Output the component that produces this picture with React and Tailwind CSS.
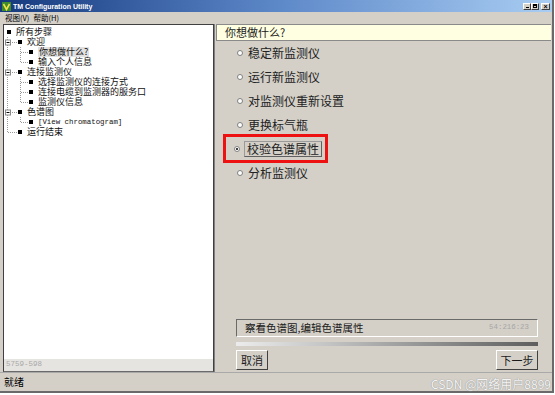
import React from "react";

const cjk = "font-['Noto_Sans_CJK_SC','Noto_Sans',sans-serif]";

const treeRows = [
  { kind: "root", text: "所有步骤" },
  { kind: "parent", text: "欢迎" },
  { kind: "child", text: "你想做什么?", selected: true },
  { kind: "childLast", text: "输入个人信息" },
  { kind: "parent", text: "连接监测仪" },
  { kind: "child", text: "选择监测仪的连接方式" },
  { kind: "child", text: "连接电缆到监测器的服务口" },
  { kind: "childLast", text: "监测仪信息" },
  { kind: "parent", text: "色谱图" },
  { kind: "childLast", text: "[View chromatogram]", mono: true },
  { kind: "last", text: "运行结束" },
];

const options = [
  "稳定新监测仪",
  "运行新监测仪",
  "对监测仪重新设置",
  "更换标气瓶",
  "校验色谱属性",
  "分析监测仪",
];

function TreeLines({ kind }) {
  const stroke = "#9a9a9a";
  if (kind === "root") return <div className="w-[3px]" />;
  if (kind === "parent" || kind === "last") {
    return (
      <svg width="14" height="10" className="shrink-0">
        <line x1="3.5" y1="0" x2="3.5" y2={kind === "last" ? 5 : 10} stroke={stroke} strokeDasharray="1 1" />
        <line x1="4" y1="5.5" x2="14" y2="5.5" stroke={stroke} strokeDasharray="1 1" />
        {kind === "parent" && (
          <>
            <rect x="1.5" y="3" width="5" height="5" fill="white" stroke="#8a8a8a" />
            <line x1="2.5" y1="5.5" x2="5.5" y2="5.5" stroke="#000" />
          </>
        )}
      </svg>
    );
  }
  return (
    <svg width="25" height="10" className="shrink-0">
      <line x1="3.5" y1="0" x2="3.5" y2="10" stroke={stroke} strokeDasharray="1 1" />
      <line x1="16.5" y1="0" x2="16.5" y2={kind === "childLast" ? 5 : 10} stroke={stroke} strokeDasharray="1 1" />
      <line x1="17" y1="5.5" x2="25" y2="5.5" stroke={stroke} strokeDasharray="1 1" />
    </svg>
  );
}

function Radio({ checked }) {
  return (
    <div className="w-[6px] h-[6px] rounded-full border border-[#808080] bg-white flex items-center justify-center shrink-0">
      {checked && <div className="w-[2px] h-[2px] rounded-full bg-black" />}
    </div>
  );
}

function WinButton({ children, className }) {
  return (
    <button
      className={`h-[20px] bg-[#d4d0c8] border border-t-white border-l-white border-b-[#404040] border-r-[#404040] text-[11px] leading-none text-[#1a1a1a] ${cjk} ${className}`}
    >
      {children}
    </button>
  );
}

function App() {
  return (
    <div className="w-[555px] h-[395px] bg-white overflow-hidden">
      <div className="w-[554px] h-[393px] bg-[#d4d0c8] border-r-2 border-b-2 border-[#6a6a6a] flex flex-col">
        {/* title bar */}
        <div className="h-[12px] flex items-center bg-linear-to-r from-[#16397e] via-[#5d88c8] to-[#a9cdf2]">
          <svg width="9" height="9" className="ml-[2px] shrink-0">
            <rect x="0" y="0" width="9" height="9" fill="#3f8a2b" />
            <path d="M1.5 2 L4.5 7.5 L7.5 2" fill="none" stroke="#f4e04a" strokeWidth="1.6" />
          </svg>
          <span className="ml-[2px] text-[7px] font-bold text-white leading-none font-['Liberation_Sans',sans-serif]">
            TM Configuration Utility
          </span>
          <div className="ml-auto mr-[2px] flex items-center">
            <div className="w-[8px] h-[7px] bg-[#d4d0c8] border-[0.5px] border-t-white border-l-white border-b-[#404040] border-r-[#404040] flex items-end justify-center">
              <div className="w-[3px] h-px bg-black mb-px" />
            </div>
            <div className="w-[8px] h-[7px] bg-[#d4d0c8] border-[0.5px] border-t-white border-l-white border-b-[#404040] border-r-[#404040] flex items-center justify-center">
              <div className="w-[4px] h-[4px] border border-black border-t-2" />
            </div>
            <div className="ml-[2px] w-[9px] h-[7px] bg-[#d4d0c8] border-[0.5px] border-t-white border-l-white border-b-[#404040] border-r-[#404040] flex items-center justify-center text-[7px] leading-none font-bold font-['Liberation_Sans',sans-serif]">
              ×
            </div>
          </div>
        </div>

        {/* menu bar */}
        <div className={`h-[11px] flex items-center gap-[4px] pl-[5px] text-[7.5px] leading-none text-black ${cjk}`}>
          <span>视图(V)</span>
          <span>帮助(H)</span>
        </div>

        {/* body */}
        <div className="mt-px h-[348px] flex">
          {/* left tree */}
          <div className="ml-[3px] w-[211px] border border-[#404040] border-b-[#6a6a6a] flex flex-col bg-white">
            <div className={`flex-1 pt-[2px] text-[9px] text-[#111] ${cjk}`}>
              {treeRows.map((r, i) => (
                <div key={i} className="h-[10px] flex items-center leading-[10px]">
                  <TreeLines kind={r.kind} />
                  <div className="w-[4px] h-[4px] bg-black shrink-0" />
                  <span
                    className={`ml-[5px] h-[10px] whitespace-nowrap ${r.selected ? "bg-[#e2e1e1] px-px -ml-px" : ""} ${
                      r.mono ? "font-['Liberation_Mono',monospace] text-[7.4px]" : ""
                    }`}
                  >
                    {r.text}
                  </span>
                </div>
              ))}
            </div>
            <div className="h-[12px] bg-[#e6e4e0] flex items-center pl-[2px] text-[7.5px] text-[#a8a8a8] font-['Liberation_Mono',monospace] leading-none">
              5759-598
            </div>
          </div>

          {/* right wizard */}
          <div className="w-[337px] flex flex-col border-l border-[#808080]">
            <div className={`ml-[1px] h-[17px] bg-[#ffffe1] border border-[#8a8a8a] border-r-0 flex items-center pl-[8px] text-[11px] text-[#1a1a1a] leading-none ${cjk}`}>
              你想做什么?
            </div>
            <div className={`flex flex-col text-[12px] text-[#222] leading-none ${cjk}`}>
              {options.map((o, i) =>
                i === 4 ? (
                  <div
                    key={i}
                    className="ml-[8px] w-[105px] h-[29px] -mt-[3px] -mb-[2px] border-[3px] border-[#ee1111] flex items-center pl-[8px]"
                  >
                    <Radio checked />
                    <span className="ml-[4px] h-[16px] px-[2px] flex items-center border border-[#9a9a9a] border-r-[#606060] border-b-[#606060]">
                      {o}
                    </span>
                  </div>
                ) : (
                  <div key={i} className="h-[24px] flex items-center pl-[22px]">
                    <Radio />
                    <span className="ml-[5px]">{o}</span>
                  </div>
                )
              )}
            </div>
            <div className="flex-1" />
            <div className="ml-[21px] mr-[13px] flex flex-col">
              <div className="h-[18px] border border-[#6a6a6a] border-r-white border-b-white flex items-center px-[8px] bg-[#d4d0c8]">
                <span className={`text-[10.5px] text-[#1a1a1a] leading-none ${cjk}`}>察看色谱图,编辑色谱属性</span>
                <span className="ml-auto text-[7.4px] text-[#a6a6a6] leading-none font-['Liberation_Mono',monospace]">
                  54:216:23
                </span>
              </div>
              <div className="mt-[5px] h-[4px] bg-linear-to-r from-[#ececec] via-[#c4c4c4] via-30% to-[#5e5e5e]" />
              <div className="mt-[4px] flex justify-between">
                <WinButton className="w-[32px]">取消</WinButton>
                <WinButton className="w-[42px]">下一步</WinButton>
              </div>
            </div>
            <div className="h-[2px]" />
          </div>
        </div>

        {/* status bar */}
        <div className="flex-1 flex items-center border-t border-[#a9a9a9] pl-[4px] pr-[1px]">
          <span className={`text-[10px] text-black leading-none ${cjk}`}>就绪</span>
          <span
            className={`ml-auto mt-[3px] text-[12px] leading-none text-[#f4f4f4] [text-shadow:0_0_1px_#9a9a9a,0_0_1px_#9a9a9a] ${cjk}`}
          >
            CSDN @网络用户8899
          </span>
        </div>
      </div>
    </div>
  );
}

export default App;
